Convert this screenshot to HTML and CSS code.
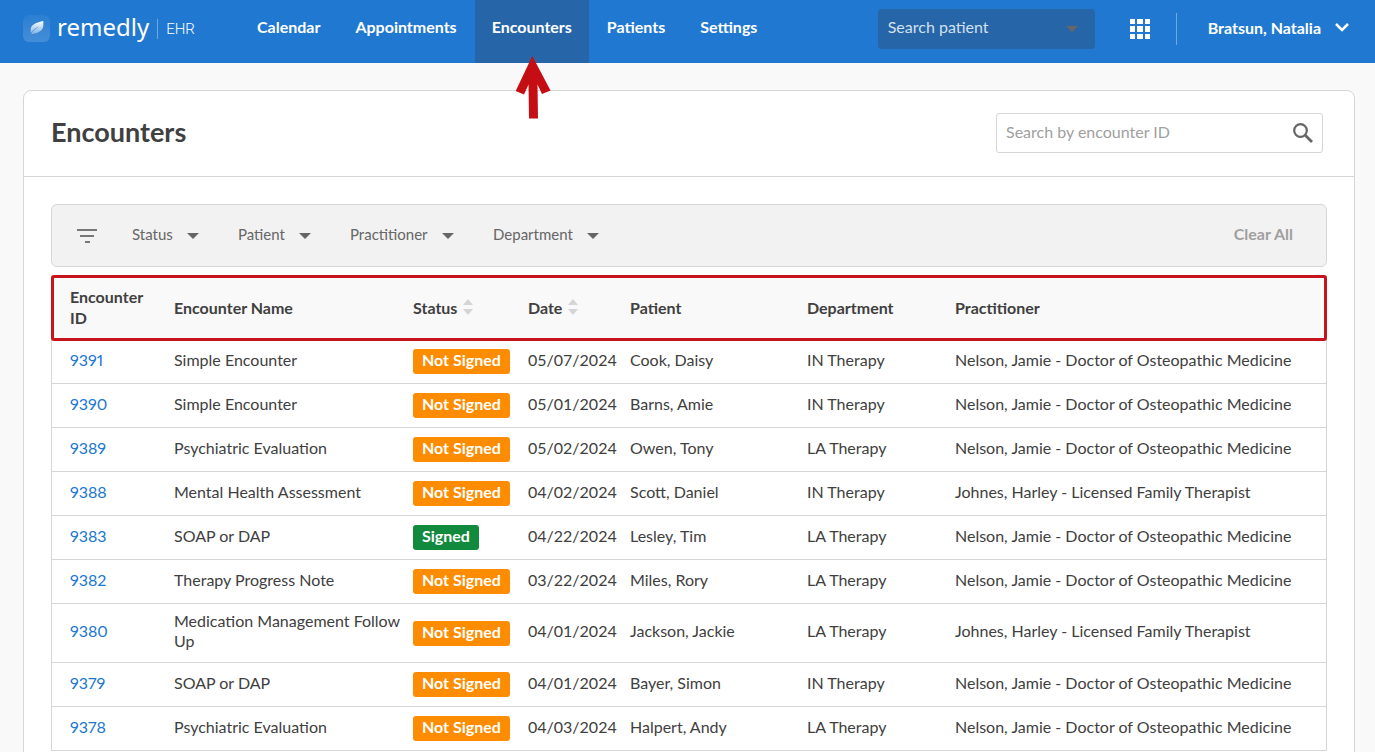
FILE: index.html
```html
<!DOCTYPE html>
<html lang="en">

<head>
    <meta charset="UTF-8">
    <meta name="viewport" content="width=device-width, initial-scale=1">
    <title>Encounters - remedly EHR</title>
    <link rel="stylesheet" href="styles.css">
</head>

<body>
    <header class="topbar">
        <a class="brand" href="#">
            <svg class="brand-logo" width="27" height="27" viewBox="0 0 27 27" aria-hidden="true">
                <defs>
                    <linearGradient id="tile" x1="0" y1="0" x2="0" y2="1">
                        <stop offset="0" stop-color="#fff" stop-opacity=".05" />
                        <stop offset="1" stop-color="#fff" stop-opacity=".16" />
                    </linearGradient>
                    <linearGradient id="leaf" x1="0" y1="0" x2="0" y2="1">
                        <stop offset="0" stop-color="#fff" />
                        <stop offset="1" stop-color="#fff" stop-opacity=".35" />
                    </linearGradient>
                </defs>
                <rect width="27" height="27" rx="6" fill="url(#tile)" />
                <path d="M20.300 6C14 7.500 8.500 9 7.700 14C7.600 15.500 7.600 16.800 7.800 18C10.500 14.500 13 12.800 16 11.500C12.500 13.700 10 15.800 8 19.200C14.500 18.300 19.500 16.500 20.300 11Z" fill="url(#leaf)" />
            </svg>
            <span class="brand-name">remedly</span>
            <span class="brand-product">EHR</span>
        </a>
        <nav class="menu">
            <a class="menu-item" href="#">Calendar</a>
            <a class="menu-item" href="#">Appointments</a>
            <a class="menu-item active" href="#" aria-current="page">Encounters
                <svg class="pointer" width="36" height="64" viewBox="0 0 36 64" aria-hidden="true">
                    <path d="M17.300 0L35.500 34.500L27 38L22.500 28.500L23 62.500H14L13.500 28.500L9 38.500L.700 35Z" fill="#c50e14" />
                </svg>
            </a>
            <a class="menu-item" href="#">Patients</a>
            <a class="menu-item" href="#">Settings</a>
        </nav>
        <div class="tools">
            <div class="patient-search">
                <select aria-label="Search patient">
                    <option>Search patient</option>
                </select>
                <svg class="caret" width="12" height="6" viewBox="0 0 12 6" aria-hidden="true"><path d="M0 0H12L6 6Z" fill="currentColor" /></svg>
            </div>
            <button class="apps" type="button" aria-label="Apps">
                <svg width="20" height="20" viewBox="0 0 20 20" fill="#fff" aria-hidden="true">
                    <path d="M0 0h5v5H0zM7 0h6v5H7zM15 0h5v5h-5zM0 7h5v6H0zM7 7h6v6H7zM15 7h5v6h-5zM0 15h5v5H0zM7 15h6v5H7zM15 15h5v5h-5z" />
                </svg>
            </button>
            <button class="user" type="button">Bratsun, Natalia
                <svg width="14" height="9" viewBox="0 0 14 9" aria-hidden="true"><path d="M1 1L7 7L13 1" fill="none" stroke="#fff" stroke-width="2.500" /></svg>
            </button>
        </div>
    </header>

    <main class="card">
        <div class="card-header">
            <h1>Encounters</h1>
            <form class="id-search">
                <input type="text" placeholder="Search by encounter ID" aria-label="Search by encounter ID">
                <button type="button" aria-label="Search">
                    <svg width="20" height="20" viewBox="0 0 20 20" fill="none" stroke="#666" aria-hidden="true">
                        <circle cx="7.500" cy="7.500" r="6.300" stroke-width="2.200" />
                        <path d="M12.300 12.300L19 19" stroke-width="2.800" />
                    </svg>
                </button>
            </form>
        </div>

        <div class="card-body">
            <div class="filters">
                <svg class="filter-icon" width="20" height="14" viewBox="0 0 20 14" aria-hidden="true">
                    <path d="M0 1H20M3 7H17M8 13H13" stroke="#777" stroke-width="2" />
                </svg>
                <div class="filter">
                    <select aria-label="Status"><option>Status</option></select>
                    <svg class="caret" width="12" height="6" viewBox="0 0 12 6" aria-hidden="true"><path d="M0 0H12L6 6Z" fill="currentColor" /></svg>
                </div>
                <div class="filter">
                    <select aria-label="Patient"><option>Patient</option></select>
                    <svg class="caret" width="12" height="6" viewBox="0 0 12 6" aria-hidden="true"><path d="M0 0H12L6 6Z" fill="currentColor" /></svg>
                </div>
                <div class="filter">
                    <select aria-label="Practitioner"><option>Practitioner</option></select>
                    <svg class="caret" width="12" height="6" viewBox="0 0 12 6" aria-hidden="true"><path d="M0 0H12L6 6Z" fill="currentColor" /></svg>
                </div>
                <div class="filter">
                    <select aria-label="Department"><option>Department</option></select>
                    <svg class="caret" width="12" height="6" viewBox="0 0 12 6" aria-hidden="true"><path d="M0 0H12L6 6Z" fill="currentColor" /></svg>
                </div>
                <button class="clear" type="button">Clear All</button>
            </div>

            <table class="encounters">
                <colgroup>
                    <col class="col-id">
                    <col class="col-name">
                    <col class="col-status">
                    <col class="col-date">
                    <col class="col-patient">
                    <col class="col-department">
                    <col>
                </colgroup>
                <thead>
                    <tr>
                        <th scope="col">Encounter ID</th>
                        <th scope="col">Encounter Name</th>
                        <th scope="col"><button class="sort" type="button">Status
                            <svg width="10" height="16" viewBox="0 0 10 16" aria-hidden="true"><path d="M0 6L5 0L10 6ZM0 10H10L5 16Z" fill="#d5d5d5" /></svg></button></th>
                        <th scope="col"><button class="sort" type="button">Date
                            <svg width="10" height="16" viewBox="0 0 10 16" aria-hidden="true"><path d="M0 6L5 0L10 6ZM0 10H10L5 16Z" fill="#d5d5d5" /></svg></button></th>
                        <th scope="col">Patient</th>
                        <th scope="col">Department</th>
                        <th scope="col">Practitioner</th>
                    </tr>
                </thead>
                <tbody>
                    <tr>
                        <td><a href="#">9391</a></td>
                        <td class="name">Simple Encounter</td>
                        <td class="status"><span class="badge">Not Signed</span></td>
                        <td>05/07/2024</td>
                        <td>Cook, Daisy</td>
                        <td>IN Therapy</td>
                        <td>Nelson, Jamie - Doctor of Osteopathic Medicine</td>
                    </tr>
                    <tr>
                        <td><a href="#">9390</a></td>
                        <td class="name">Simple Encounter</td>
                        <td class="status"><span class="badge">Not Signed</span></td>
                        <td>05/01/2024</td>
                        <td>Barns, Amie</td>
                        <td>IN Therapy</td>
                        <td>Nelson, Jamie - Doctor of Osteopathic Medicine</td>
                    </tr>
                    <tr>
                        <td><a href="#">9389</a></td>
                        <td class="name">Psychiatric Evaluation</td>
                        <td class="status"><span class="badge">Not Signed</span></td>
                        <td>05/02/2024</td>
                        <td>Owen, Tony</td>
                        <td>LA Therapy</td>
                        <td>Nelson, Jamie - Doctor of Osteopathic Medicine</td>
                    </tr>
                    <tr>
                        <td><a href="#">9388</a></td>
                        <td class="name">Mental Health Assessment</td>
                        <td class="status"><span class="badge">Not Signed</span></td>
                        <td>04/02/2024</td>
                        <td>Scott, Daniel</td>
                        <td>IN Therapy</td>
                        <td>Johnes, Harley - Licensed Family Therapist</td>
                    </tr>
                    <tr>
                        <td><a href="#">9383</a></td>
                        <td class="name">SOAP or DAP</td>
                        <td class="status"><span class="badge signed">Signed</span></td>
                        <td>04/22/2024</td>
                        <td>Lesley, Tim</td>
                        <td>LA Therapy</td>
                        <td>Nelson, Jamie - Doctor of Osteopathic Medicine</td>
                    </tr>
                    <tr>
                        <td><a href="#">9382</a></td>
                        <td class="name">Therapy Progress Note</td>
                        <td class="status"><span class="badge">Not Signed</span></td>
                        <td>03/22/2024</td>
                        <td>Miles, Rory</td>
                        <td>LA Therapy</td>
                        <td>Nelson, Jamie - Doctor of Osteopathic Medicine</td>
                    </tr>
                    <tr>
                        <td><a href="#">9380</a></td>
                        <td class="name">Medication Management Follow Up</td>
                        <td class="status"><span class="badge">Not Signed</span></td>
                        <td>04/01/2024</td>
                        <td>Jackson, Jackie</td>
                        <td>LA Therapy</td>
                        <td>Johnes, Harley - Licensed Family Therapist</td>
                    </tr>
                    <tr>
                        <td><a href="#">9379</a></td>
                        <td class="name">SOAP or DAP</td>
                        <td class="status"><span class="badge">Not Signed</span></td>
                        <td>04/01/2024</td>
                        <td>Bayer, Simon</td>
                        <td>IN Therapy</td>
                        <td>Nelson, Jamie - Doctor of Osteopathic Medicine</td>
                    </tr>
                    <tr>
                        <td><a href="#">9378</a></td>
                        <td class="name">Psychiatric Evaluation</td>
                        <td class="status"><span class="badge">Not Signed</span></td>
                        <td>04/03/2024</td>
                        <td>Halpert, Andy</td>
                        <td>LA Therapy</td>
                        <td>Nelson, Jamie - Doctor of Osteopathic Medicine</td>
                    </tr>
                </tbody>
            </table>
        </div>
    </main>
</body>

</html>
```
FILE: styles.css
```css
* {
    box-sizing: border-box;
}

body {
    margin: 0;
    background-color: #f9f9f9;
    color: #404040;
    font-family: Lato, "Liberation Sans", sans-serif;
    font-size: 16px;
    line-height: 20px;
}

a {
    text-decoration: none;
}

button,
select,
input {
    margin: 0;
    padding: 0;
    border: 0;
    background: none;
    color: inherit;
    font: inherit;
}

select {
    appearance: none;
}

/* top bar */

.topbar {
    display: flex;
    height: 63px;
    padding: 0 26px 0 23px;
    background-color: #2078d0;
    color: #fff;
}

.brand {
    display: flex;
    align-items: center;
    width: 217px;
    padding-bottom: 6px;
    color: #fff;
}

.brand-name {
    margin-left: 7px;
    padding-bottom: 4px;
    font-family: "Noto Sans", sans-serif;
    font-size: 24px;
}

.brand-product {
    margin-left: 8px;
    padding-left: 8px;
    border-left: 1px solid #6fa8e0;
    font-family: Roboto, sans-serif;
    font-size: 15px;
    font-weight: 300;
}

.menu {
    display: flex;
    gap: 1px;
}

.menu-item {
    position: relative;
    padding: 17px;
    color: #fff;
    font-weight: 700;
}

.menu-item.active {
    background-color: #2565a8;
}

.pointer {
    position: absolute;
    top: 56px;
    left: 40px;
    z-index: 1;
}

.tools {
    display: flex;
    align-items: center;
    margin-left: auto;
    padding-bottom: 6px;
}

.patient-search {
    display: flex;
    align-items: center;
    position: relative;
    width: 217px;
    height: 40px;
    border-radius: 4px;
    background-color: #2565a8;
    color: #d3e0ee;
}

.patient-search select {
    width: 100%;
    height: 100%;
    padding: 0 36px 3px 10px;
}

.caret {
    position: absolute;
    right: 0;
    color: #666;
    pointer-events: none;
}

.patient-search .caret {
    right: 17px;
}

.apps {
    height: 20px;
    margin: 0 26px 0 35px;
}

.apps svg,
.user svg {
    display: block;
}

.user {
    display: flex;
    align-items: center;
    gap: 14px;
    height: 32px;
    padding: 0 0 2px 31px;
    border-left: 1px solid #6fa8e0;
    font-weight: 700;
}

/* page card */

.card {
    margin: 27px 20px 0 23px;
    border: 1px solid #d6d6d6;
    border-radius: 8px;
    background-color: #fff;
}

.card-header {
    display: flex;
    align-items: center;
    justify-content: space-between;
    padding: 22px 31px 23px 27px;
    border-bottom: 1px solid #d6d6d6;
}

h1 {
    margin: 0;
    padding-bottom: 3px;
    font-size: 27px;
    font-weight: 700;
    line-height: 32px;
}

.id-search {
    display: flex;
    align-items: center;
    width: 327px;
    height: 40px;
    padding: 0 9px;
    border: 1px solid #d6d6d6;
    border-radius: 3px;
}

.id-search input {
    flex: 1;
    min-width: 0;
    padding-bottom: 3px;
    outline: none;
}

.id-search input::placeholder {
    color: #a0a0a0;
}

.id-search svg {
    display: block;
}

.card-body {
    padding: 27px 27px 30px;
}

.filters {
    display: flex;
    align-items: center;
    height: 63px;
    padding: 0 33px 0 25px;
    border: 1px solid #d6d6d6;
    border-radius: 6px;
    background-color: #f2f2f2;
    color: #666;
}

.filter-icon {
    margin-right: 35px;
}

.filter {
    display: flex;
    align-items: center;
    position: relative;
    margin-right: 39px;
}

.filter select {
    padding: 0 26px 3px 0;
    font-size: 15px;
}

.clear {
    margin-left: auto;
    padding-bottom: 3px;
    color: #a0a0a0;
    font-weight: 700;
}

/* table */

.encounters {
    width: 100%;
    margin-top: 9px;
    border: 1px solid #d6d6d6;
    border-width: 0 1px;
    border-spacing: 0;
    table-layout: fixed;
}

.col-id {
    width: 113px;
}

.col-name {
    width: 239px;
}

.col-status {
    width: 115px;
}

.col-date {
    width: 102px;
}

.col-patient {
    width: 177px;
}

.col-department {
    width: 148px;
}

.encounters thead {
    outline: 3px solid #c5141c;
    outline-offset: -2px;
    border-radius: 2px;
}

th {
    height: 64px;
    padding: 0 9px 2px;
    background-color: #f9f9f9;
    text-align: left;
    line-height: 21px;
}

td {
    height: 44px;
    padding: 7px 9px 11px;
    border-bottom: 1px solid #d6d6d6;
}

th:first-child,
td:first-child {
    padding-left: 18px;
}

td:first-child {
    font-variant-numeric: proportional-nums;
}

td.name {
    padding-right: 0;
}

td.status {
    padding: 9px;
}

td a {
    color: #2078d0;
}

.sort {
    display: flex;
    align-items: center;
    gap: 6px;
    font-weight: 700;
}

.badge {
    display: block;
    width: fit-content;
    padding: 1px 9px 4px;
    border-radius: 3px;
    background-color: #fd8c00;
    color: #fff;
    font-weight: 700;
    white-space: nowrap;
}

.badge.signed {
    background-color: #128a3e;
}
```
